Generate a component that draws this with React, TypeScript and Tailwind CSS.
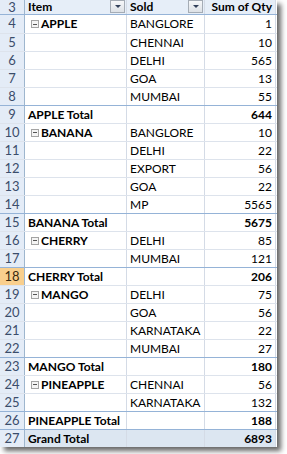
import React from 'react';

type Row =
  | { n: number; kind: 'item'; item?: string; sold: string; qty: number }
  | { n: number; kind: 'total'; label: string; qty: number }
  | { n: number; kind: 'grand'; label: string; qty: number };

const rows: Row[] = [
  { n: 4, kind: 'item', item: 'APPLE', sold: 'BANGLORE', qty: 1 },
  { n: 5, kind: 'item', sold: 'CHENNAI', qty: 10 },
  { n: 6, kind: 'item', sold: 'DELHI', qty: 565 },
  { n: 7, kind: 'item', sold: 'GOA', qty: 13 },
  { n: 8, kind: 'item', sold: 'MUMBAI', qty: 55 },
  { n: 9, kind: 'total', label: 'APPLE Total', qty: 644 },
  { n: 10, kind: 'item', item: 'BANANA', sold: 'BANGLORE', qty: 10 },
  { n: 11, kind: 'item', sold: 'DELHI', qty: 22 },
  { n: 12, kind: 'item', sold: 'EXPORT', qty: 56 },
  { n: 13, kind: 'item', sold: 'GOA', qty: 22 },
  { n: 14, kind: 'item', sold: 'MP', qty: 5565 },
  { n: 15, kind: 'total', label: 'BANANA Total', qty: 5675 },
  { n: 16, kind: 'item', item: 'CHERRY', sold: 'DELHI', qty: 85 },
  { n: 17, kind: 'item', sold: 'MUMBAI', qty: 121 },
  { n: 18, kind: 'total', label: 'CHERRY Total', qty: 206 },
  { n: 19, kind: 'item', item: 'MANGO', sold: 'DELHI', qty: 75 },
  { n: 20, kind: 'item', sold: 'GOA', qty: 56 },
  { n: 21, kind: 'item', sold: 'KARNATAKA', qty: 22 },
  { n: 22, kind: 'item', sold: 'MUMBAI', qty: 27 },
  { n: 23, kind: 'total', label: 'MANGO Total', qty: 180 },
  { n: 24, kind: 'item', item: 'PINEAPPLE', sold: 'CHENNAI', qty: 56 },
  { n: 25, kind: 'item', sold: 'KARNATAKA', qty: 132 },
  { n: 26, kind: 'total', label: 'PINEAPPLE Total', qty: 188 },
  { n: 27, kind: 'grand', label: 'Grand Total', qty: 6893 },
];

function Collapse() {
  return (
    <span className="mr-[2px] inline-flex h-[8px] w-[8px] items-center justify-center border border-[#a3a3a3] bg-[#f4f4f4]">
      <span className="h-px w-[4px] bg-[#555]" />
    </span>
  );
}

function Dropdown() {
  return (
    <span className="mb-[1px] flex h-[13px] w-[15px] items-center justify-center border border-[#a5acb5] bg-gradient-to-b from-[#f6f7f9] to-[#dde1e6]">
      <span className="h-0 w-0 border-x-[3px] border-t-[3px] border-x-transparent border-t-[#33405a]" />
    </span>
  );
}

export default function App() {
  return (
    <div className="h-[454px] w-[287px] overflow-hidden bg-white font-['Lato','Liberation_Sans',sans-serif] text-[12px] whitespace-nowrap text-black">
      <div className="w-[277px] bg-white shadow-[4px_4px_5px_rgba(0,0,0,0.6)]">
        {/* header row 3 */}
        <div className="flex h-[15px] overflow-hidden border-b border-[#95b3d7] leading-[14px]">
          <div className="flex w-[25px] shrink-0 items-center justify-center border-r border-[#9eb6ce] bg-[#e4ecf7] text-[13px] leading-[14px] text-[#3b4d6b]">3</div>
          <div className="flex w-[102px] shrink-0 items-center justify-between border-r border-[#d4dbe6] bg-[#e6eef8] pl-[3px] pr-[1px] font-bold">
            <span>Item</span>
            <Dropdown />
          </div>
          <div className="flex w-[78px] shrink-0 items-center justify-between border-r border-[#d4dbe6] bg-[#e6eef8] pl-[3px] pr-[1px] font-bold">
            <span>Sold</span>
            <Dropdown />
          </div>
          <div className="flex w-[71px] shrink-0 items-center justify-end border-r border-[#d4dbe6] bg-[#e6eef8] pr-[3px] font-bold">Sum of Qty</div>
        </div>

        {rows.map((r) => {
          const selected = r.n === 18;
          const isTotal = r.kind === 'total';
          const isGrand = r.kind === 'grand';
          const rowBorder = r.n === 4 ? '' : isTotal || isGrand ? 'border-t border-[#95b3d7]' : 'border-t border-[#dde3ec]';
          const bg = isGrand ? 'bg-[#dce6f1]' : 'bg-white';
          return (
            <div key={r.n} className={`flex h-[18px] ${rowBorder}`}>
              <div
                className={`flex w-[25px] shrink-0 items-center justify-center border-r border-[#9eb6ce] text-[13px] ${
                  selected ? 'bg-[#f9cf8d] text-[#3a2a10]' : 'bg-[#e4ecf7] text-[#3b4d6b]'
                }`}
              >
                {r.n}
              </div>
              <div className={`flex w-[102px] shrink-0 items-center border-r border-[#d4dbe6] pl-[3px] font-bold ${bg}`}>
                {r.kind === 'item' && r.item ? (
                  <span className="flex items-center pl-[3px]">
                    <Collapse />
                    {r.item}
                  </span>
                ) : r.kind !== 'item' ? (
                  r.label
                ) : null}
              </div>
              <div className={`flex w-[78px] shrink-0 items-center border-r border-[#d4dbe6] pl-[3px] ${bg}`}>
                {r.kind === 'item' ? r.sold : ''}
              </div>
              <div className={`flex w-[71px] shrink-0 items-center justify-end border-r border-[#d4dbe6] pr-[3px] ${bg} ${isTotal || isGrand ? 'font-bold' : ''}`}>
                {r.qty}
              </div>
            </div>
          );
        })}
      </div>
    </div>
  );
}
